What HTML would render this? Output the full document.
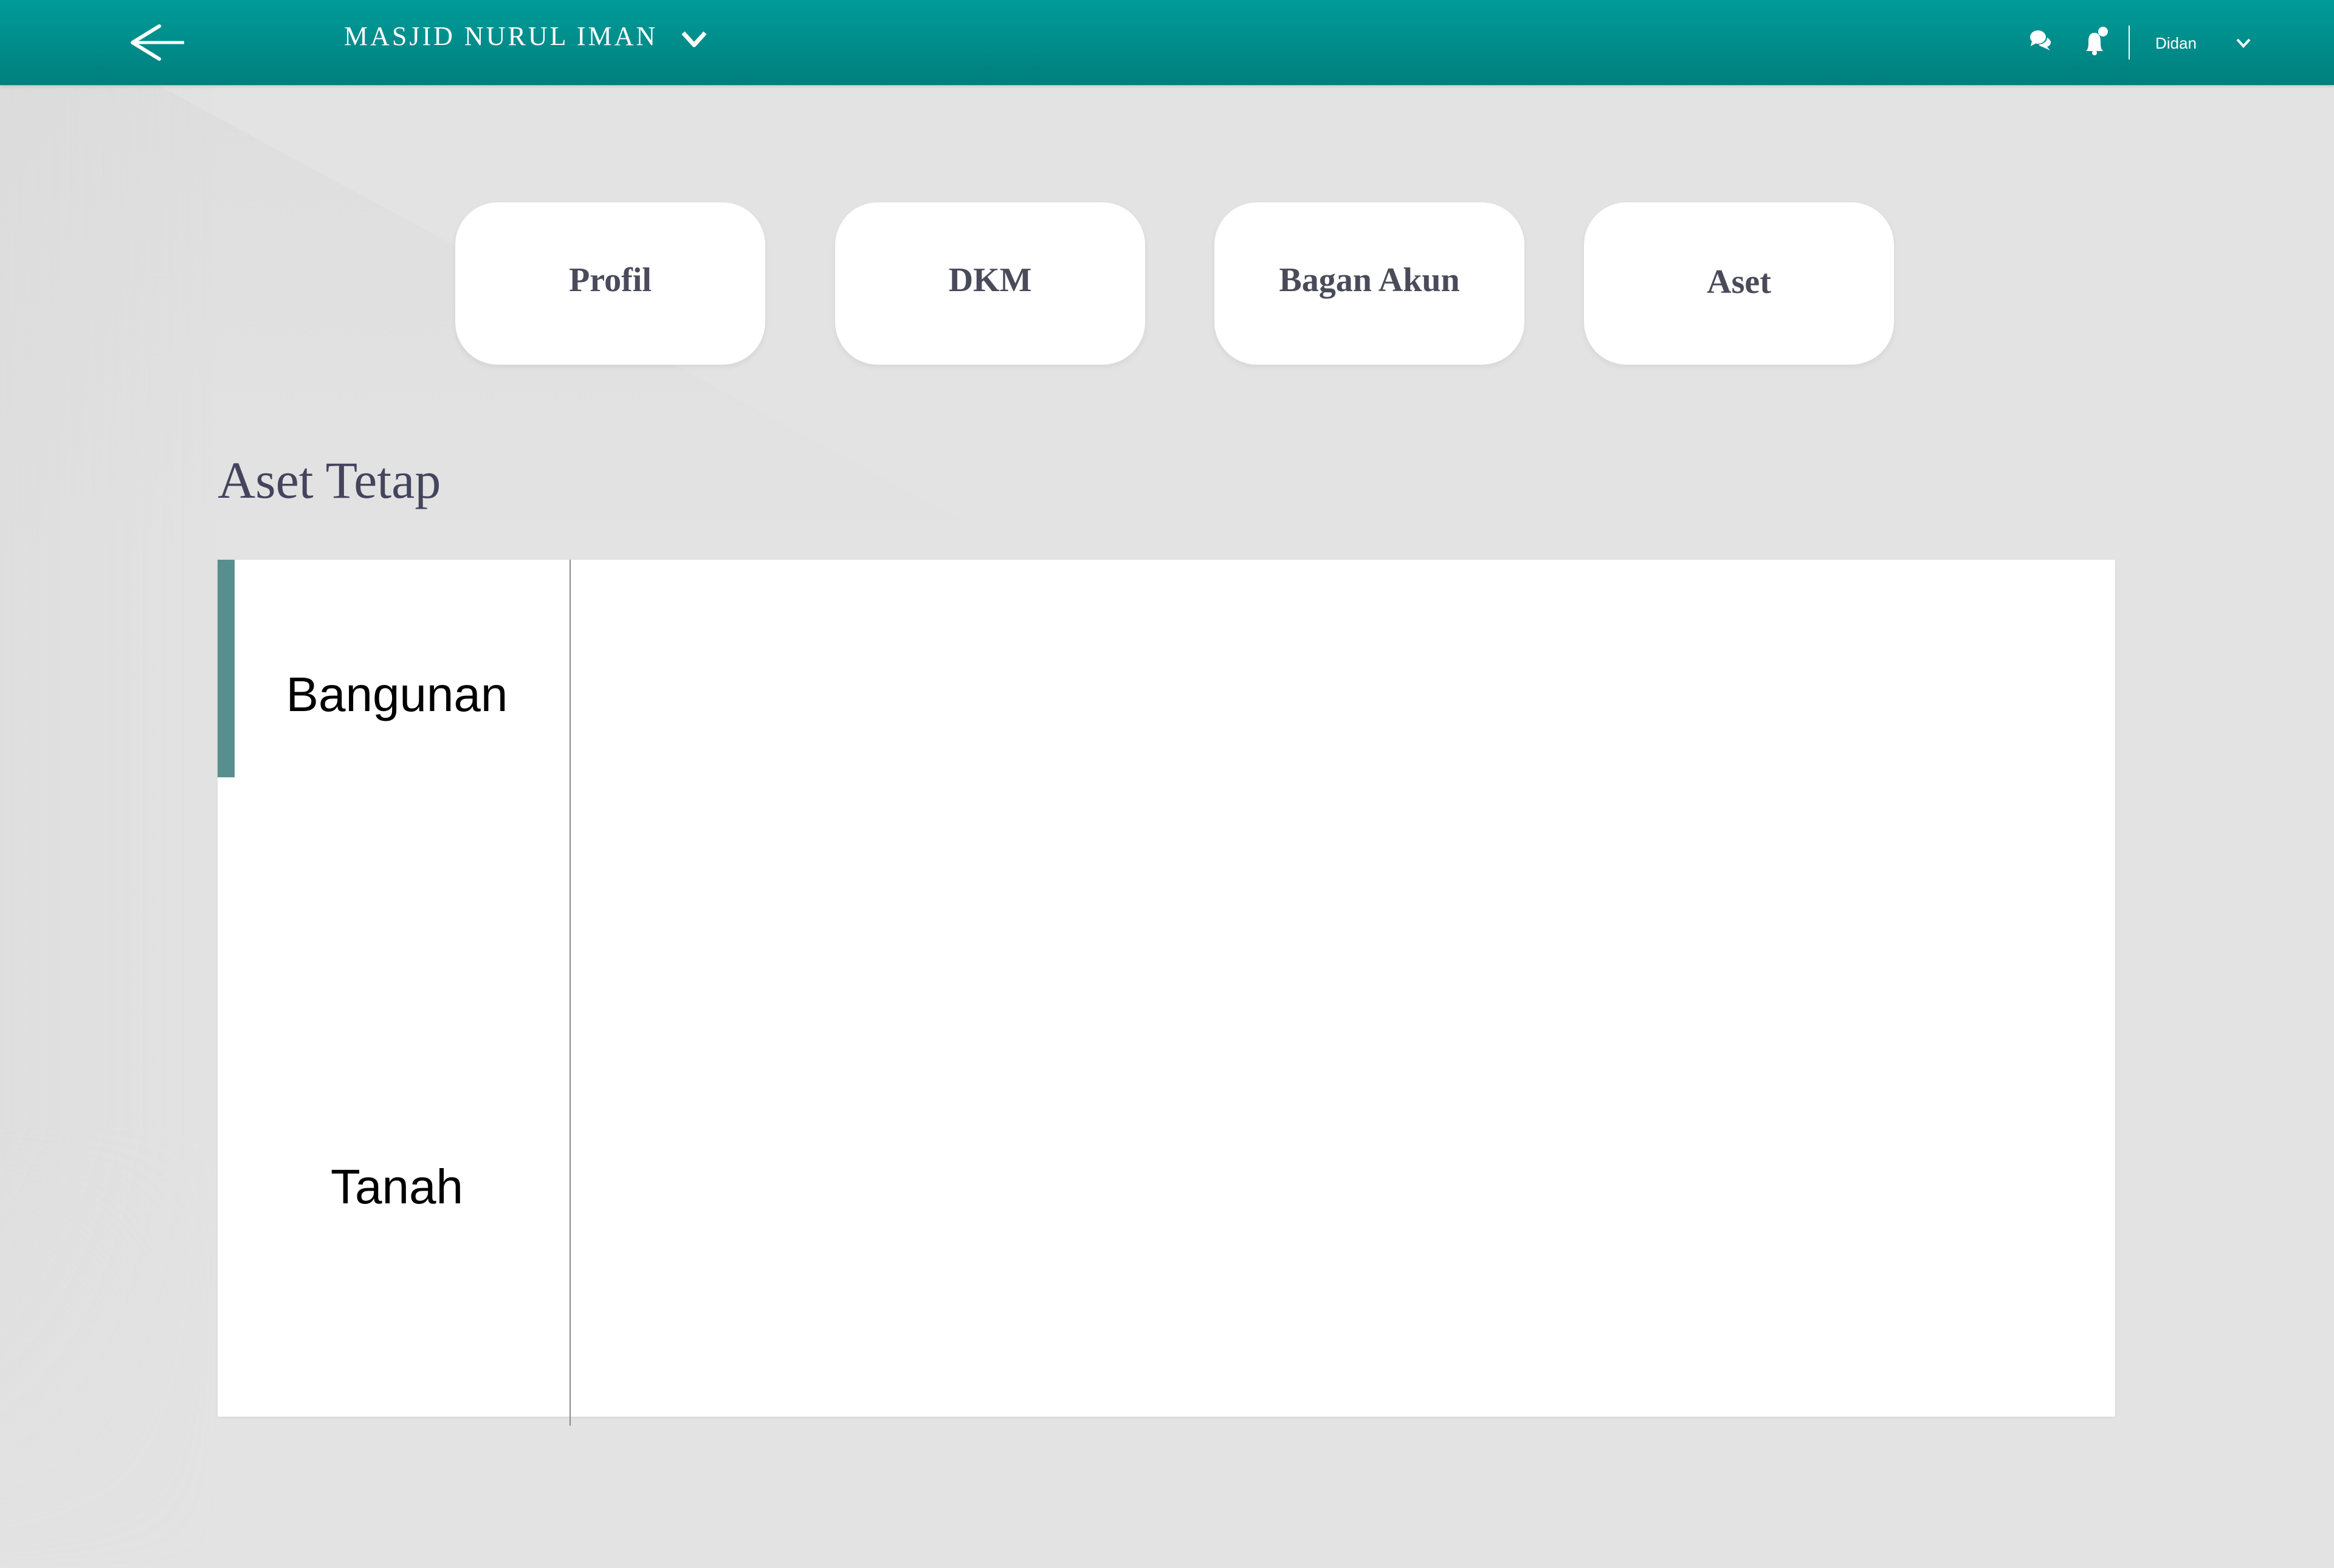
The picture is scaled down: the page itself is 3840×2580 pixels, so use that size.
<!DOCTYPE html>
<html><head><meta charset="utf-8"><style>
*{margin:0;padding:0;box-sizing:border-box}
html,body{width:3840px;height:2580px;overflow:hidden}
body{background:#e3e3e3;position:relative;font-family:"Liberation Sans",sans-serif}
.hdr{position:absolute;left:0;top:0;width:3840px;height:140px;background:linear-gradient(#009b99,#007f7d);box-shadow:0 2px 4px rgba(0,0,0,.15)}
.title{position:absolute;left:566px;top:30px;font-family:"Liberation Serif",serif;font-size:44px;letter-spacing:4px;color:#fff;line-height:60px;white-space:nowrap}
.card{position:absolute;top:333px;width:510px;height:267px;background:#fff;border-radius:70px;box-shadow:0 4px 10px rgba(0,0,0,.06);font-family:"Liberation Serif",serif;font-weight:bold;font-size:56px;color:#4a4b5a;text-align:center;line-height:256px}
.h{position:absolute;left:358px;top:740px;font-family:"Liberation Serif",serif;font-size:86px;color:#45445e;white-space:nowrap}
.panel{position:absolute;left:358px;top:921px;width:3122px;height:1410px;background:#fff;box-shadow:0 1px 4px rgba(0,0,0,.08)}
.bar{position:absolute;left:358px;top:921px;width:28px;height:358px;background:#578f8e}
.vl{position:absolute;left:937px;top:921px;width:2px;height:1425px;background:#8a8a8a}
.item{position:absolute;left:358px;width:580px;text-align:center;font-size:80px;color:#000;white-space:nowrap}
</style></head><body>
<svg style="position:absolute;left:0;top:140px" width="1800" height="2440">
<defs><linearGradient id="g" x1="0" y1="0" x2="0" y2="1"><stop offset="0" stop-color="#dcdcdc" stop-opacity=".7"/><stop offset="1" stop-color="#dcdcdc" stop-opacity="0"/></linearGradient>
<linearGradient id="l" x1="0" y1="0" x2="1" y2="0"><stop offset="0" stop-color="#d8d8d8" stop-opacity=".4"/><stop offset="1" stop-color="#d8d8d8" stop-opacity="0"/></linearGradient>
<linearGradient id="v" x1="0" y1="0" x2="0" y2="1"><stop offset="0" stop-color="#fff"/><stop offset=".7" stop-color="#fff"/><stop offset="1" stop-color="#000"/></linearGradient>
<mask id="m"><rect width="400" height="2440" fill="url(#v)"/></mask></defs>
<polygon points="260,0 1700,780 0,780 0,0" fill="url(#g)"/>
<rect x="0" y="0" width="360" height="2440" fill="url(#l)" mask="url(#m)"/></svg>
<div class="hdr">
<svg style="position:absolute;left:205px;top:38px" width="110" height="64"><path d="M57 5 L13 32 L57 59" fill="none" stroke="#fff" stroke-width="6" stroke-linecap="round" stroke-linejoin="round"/><path d="M13 32 H98" stroke="#fff" stroke-width="5"/></svg>
<div class="title">MASJID NURUL IMAN</div>
<svg style="position:absolute;left:1120px;top:48px" width="44" height="32"><path d="M4 6 L22 26 L40 6" fill="none" stroke="#fff" stroke-width="7" stroke-linejoin="round"/></svg>
<svg style="position:absolute;left:3338px;top:46px" width="42" height="40"><ellipse cx="15" cy="15" rx="13" ry="11" fill="#fff"/><path d="M5 22 L3 30 L12 25Z" fill="#fff"/><path d="M30 16 C38 20 38 28 30 31 L35 37 L22 31 C19 30 17 29 16 27 C24 27 30 22 30 16Z" fill="#fff"/></svg>
<svg style="position:absolute;left:3426px;top:42px" width="50" height="50"><path d="M6 42 C10 38 10 34 10 26 C10 16 14 12 20 12 C26 12 30 16 30 26 C30 34 30 38 34 42 Z" fill="#fff"/><circle cx="20" cy="45" r="4" fill="#fff"/><circle cx="34" cy="10" r="8" fill="#fff"/></svg>
<div style="position:absolute;left:3502px;top:42px;width:2px;height:56px;background:#fff"></div>
<div style="position:absolute;left:3546px;top:56px;font-size:26px;color:#fff">Didan</div>
<svg style="position:absolute;left:3678px;top:60px" width="26" height="22"><path d="M3 5 L13 16 L23 5" fill="none" stroke="#fff" stroke-width="4"/></svg>
</div>
<div class="card" style="left:749px">Profil</div>
<div class="card" style="left:1374px">DKM</div>
<div class="card" style="left:1998px">Bagan Akun</div>
<div class="card" style="left:2606px;line-height:262px">Aset</div>
<div class="h">Aset Tetap</div>
<div class="panel"></div>
<div class="bar"></div>
<div class="vl"></div>
<div class="item" style="top:1097px;padding-left:10px">Bangunan</div>
<div class="item" style="top:1907px;padding-left:10px">Tanah</div>
</body></html>
